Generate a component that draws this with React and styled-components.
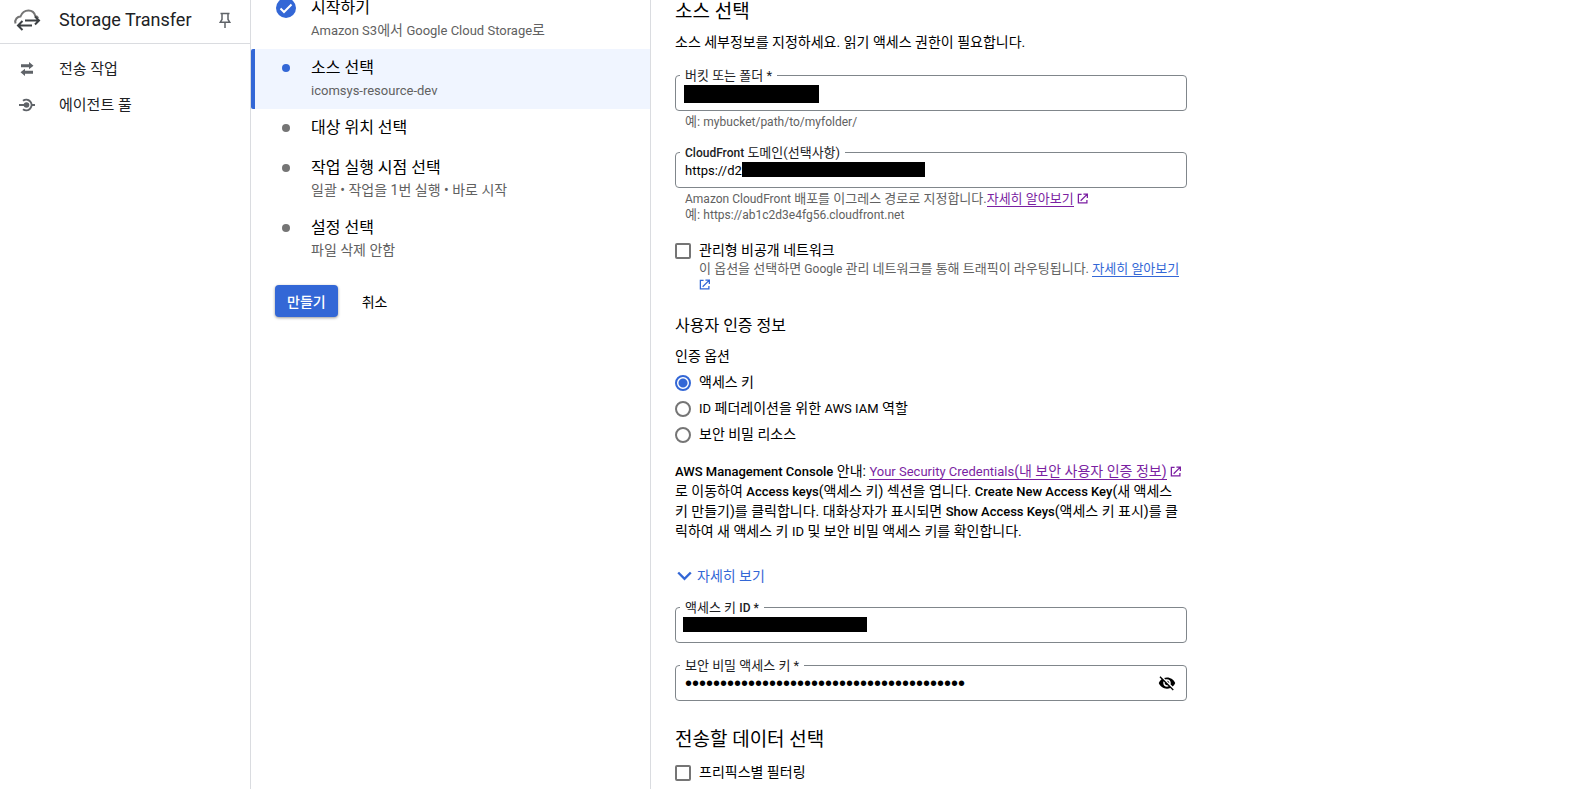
import React, { useState } from "react";
import styled, { createGlobalStyle } from "styled-components";

const GlobalStyle = createGlobalStyle`
  * {
    box-sizing: border-box;
  }

  body {
    margin: 0;
    background: #fff;
    color: #000;
    font-family: Roboto, "Noto Sans CJK KR", sans-serif;
    font-size: 14px;
    line-height: 20px;
    word-break: break-all;
  }

  button,
  input {
    font-family: inherit;
  }
`;

const Page = styled.div`
  display: flex;
  height: 100vh;
  overflow: hidden;
`;

/* ---------- sidebar ---------- */

const Sidebar = styled.nav`
  flex: 0 0 251px;
  border-right: 1px solid #dadce0;
`;

const Product = styled.header`
  display: flex;
  align-items: center;
  height: 44px;
  padding: 0 16px 4px 13px;
  border-bottom: 1px solid #dadce0;
`;

const ProductName = styled.h1`
  flex: 1;
  margin: 0 0 0 18px;
  font-size: 18px;
  font-weight: 400;
  color: #202124;
`;

const PinButton = styled.button`
  display: flex;
  padding: 0;
  border: 0;
  background: none;
  color: #5f6368;
`;

const NavList = styled.ul`
  margin: 0;
  padding: 7px 0;
  list-style: none;
`;

const NavLink = styled.a`
  display: flex;
  align-items: center;
  gap: 23px;
  height: 36px;
  padding-left: 18px;
  font-size: 15px;
  color: #202124;
  text-decoration: none;

  svg {
    color: #5f6368;
  }
`;

/* ---------- stepper ---------- */

const Stepper = styled.section`
  flex: 0 0 400px;
  border-right: 1px solid #dadce0;
`;

const StepList = styled.ol`
  margin: -11px 0 16px;
  padding: 0;
  list-style: none;
`;

const StepItem = styled.li`
  display: flex;
  gap: 14px;
  min-height: 40px;
  padding: 8px 24px 8px 20px;
  border-left: 4px solid ${({ $active }) => ($active ? "#3367d6" : "transparent")};
  border-radius: 2px 0 0 2px;
  background: ${({ $active }) => ($active ? "#f0f5ff" : "none")};
`;

const Marker = styled.span`
  display: flex;
  flex: 0 0 22px;
  align-items: center;
  justify-content: center;
  height: 22px;
`;

const Dot = styled.span`
  width: 8px;
  height: 8px;
  border-radius: 50%;
  background: ${({ $active }) => ($active ? "#3367d6" : "#757575")};
`;

const StepTitle = styled.div`
  font-size: 16px;
  line-height: 22px;
`;

const StepNote = styled.div`
  font-size: 14px;
  line-height: 22px;
  color: #616161;
`;

const Actions = styled.div`
  display: flex;
  gap: 12px;
  padding-left: 24px;
`;

const Button = styled.button`
  height: 32px;
  padding: 0 12px;
  border: 0;
  border-radius: 4px;
  font-size: 14px;
  font-weight: ${({ $primary }) => ($primary ? 500 : 400)};
  color: ${({ $primary }) => ($primary ? "#fff" : "#000")};
  background: ${({ $primary }) => ($primary ? "#3367d6" : "none")};
  box-shadow: ${({ $primary }) =>
    $primary ? "0 1px 3px rgba(0, 0, 0, 0.4)" : "none"};
`;

/* ---------- form ---------- */

const Form = styled.form`
  flex: 0 1 536px;
  min-width: 0;
  padding-left: 24px;
`;

const Heading = styled.h2`
  margin: 0 0 ${({ $gap }) => $gap || 8}px;
  font-size: 19px;
  font-weight: 400;
  line-height: 24px;
`;

const SubHeading = styled.h3`
  margin: 23px 0 10px;
  font-size: 16px;
  font-weight: 400;
  line-height: 20px;
`;

const Text = styled.p`
  margin: 0;
`;

// latin runs sit one size below the hangul around them
const En = styled.span`
  font-size: ${({ $small }) => ($small ? 12 : 13)}px;
  font-weight: ${({ $bold }) => ($bold ? 500 : "inherit")};
  line-height: 1;
`;

const Intro = styled(Text)`
  margin-bottom: 23px;
`;

const FieldGroup = styled.div`
  margin-bottom: ${({ $gap }) => $gap || 22}px;
`;

const FieldBox = styled.div`
  position: relative;
  display: flex;
  align-items: center;
  height: 36px;
  padding-right: 10px;
  border: 1px solid #80868b;
  border-radius: 4px;
`;

const FieldLabel = styled.label`
  position: absolute;
  top: -9px;
  left: 4px;
  padding: 0 5px;
  background: #fff;
  font-size: 13px;
  line-height: 18px;
  color: #202124;
`;

const Input = styled.input`
  flex: 1;
  min-width: 0;
  height: 34px;
  padding: 0 9px;
  border: 0;
  outline: 0;
  background: none;
  font-size: 13px;

  &[type="password"] {
    font-family: "Liberation Sans", sans-serif;
    font-size: 20px;
  }
`;

const Redacted = styled.span`
  position: absolute;
  top: 9px;
  left: ${({ $left }) => $left}px;
  width: ${({ $width }) => $width}px;
  height: ${({ $height }) => $height || 15}px;
  background: #000;
`;

const IconButton = styled.button`
  display: flex;
  padding: 0;
  border: 0;
  background: none;
`;

const Hint = styled.p`
  margin: ${({ $flush }) => ($flush ? 1 : 3)}px 0 0;
  padding-left: ${({ $flush }) => ($flush ? 0 : 10)}px;
  font-size: 13px;
  line-height: 16px;
  color: #616161;
`;

const Link = styled.a`
  color: ${({ $visited }) => ($visited ? "#7b1fa2" : "#3367d6")};
  text-decoration: none;

  svg {
    vertical-align: -1px;
  }
`;

const LinkText = styled.span`
  border-bottom: 1px solid currentColor;
`;

const Choice = styled.div`
  display: flex;
  gap: 8px;
`;

const ChoiceLabel = styled.label`
  display: block;
`;

const ChoiceInput = styled.input`
  appearance: none;
  flex: 0 0 16px;
  height: 16px;
  margin: 3px 0 0;
  border: 2px solid #757575;
  border-radius: ${({ type }) => (type === "radio" ? "50%" : "2px")};

  &:checked {
    border-color: #3367d6;
    background: radial-gradient(circle, #3367d6 4px, #fff 5px);
  }
`;

const RadioGroup = styled.div`
  display: flex;
  flex-direction: column;
  gap: 6px;
  margin: 6px 0 17px;
`;

const MoreButton = styled.button`
  display: flex;
  align-items: center;
  gap: 5px;
  margin: 25px 0 21px;
  padding: 0 0 0 2px;
  border: 0;
  background: none;
  color: #3367d6;
  font-size: 14px;
  line-height: 20px;
`;

const CloudIcon = () => (
  <svg width="28" height="24" viewBox="0 0 28 24" fill="none" strokeWidth="2">
    <path
      d="M2.500 15.500C1.300 11.500 4.500 8.500 7.500 8.500C9 4.500 12 2.500 15.500 2.500C19 2.500 21.500 4.800 22.300 8C23.500 8.300 24.500 9 25.200 10"
      stroke="#757575"
    />
    <path d="M5 17.500H19M9.500 13L5 17.500L9.500 22" stroke="#3c4043" />
    <path d="M12 12.500H26M22 8.500L26 12.500L22 16.500" stroke="#3c4043" />
  </svg>
);

const PinIcon = () => (
  <svg width="18" height="18" viewBox="0 0 18 18" fill="none" stroke="currentColor" strokeWidth="1.500">
    <path d="M4.500 2.500H13.500M6 2.500V8.500L4.300 11.200H13.700L12 8.500V2.500M9 11.200V17" />
  </svg>
);

const JobsIcon = () => (
  <svg width="18" height="18" viewBox="0 0 18 18" fill="currentColor">
    <path d="M3 4.200H11V2L15.500 5.700L11 9.300V7.200H3ZM15 10.800H7V8.700L2.500 12.300L7 16V13.800H15Z" />
  </svg>
);

const AgentIcon = () => (
  <svg width="18" height="18" viewBox="0 0 18 18" fill="none" stroke="currentColor" strokeWidth="2">
    <circle cx="8.500" cy="9" r="2.800" fill="currentColor" stroke="none" />
    <path d="M1 9H8M5 4.800A5.300 5.300 0 1 1 5 13.200M14 9H17" />
  </svg>
);

const CheckIcon = () => (
  <svg width="22" height="22" viewBox="0 0 22 22" fill="none">
    <circle cx="11" cy="11" r="10" fill="#3367d6" />
    <path d="M5.500 11.500L9 15L16.500 7.500" stroke="#fff" strokeWidth="2" />
  </svg>
);

const ExternalIcon = () => (
  <svg width="11" height="11" viewBox="0 0 12 12" fill="none" stroke="currentColor" strokeWidth="1.400">
    <path d="M5 1.500H1.500V10.800H10.800V7.500M7 1.200H11.300V5.500M11 1.500L4 8.500" />
  </svg>
);

const ChevronIcon = () => (
  <svg width="15" height="10" viewBox="0 0 15 10" fill="none" stroke="currentColor" strokeWidth="2.400">
    <path d="M1.200 1.500L7.500 7.800L13.800 1.500" />
  </svg>
);

const EyeOffIcon = () => (
  <svg width="18" height="18" viewBox="0 0 24 24">
    <path d="M12 7c2.760 0 5 2.240 5 5 0 .650-.130 1.260-.360 1.830l2.920 2.920c1.510-1.260 2.700-2.890 3.430-4.750-1.730-4.390-6-7.500-11-7.500-1.400 0-2.740.250-3.980.700l2.160 2.160C10.740 7.130 11.350 7 12 7zM2 4.270l2.280 2.280.460.460C3.080 8.300 1.780 10.020 1 12c1.730 4.390 6 7.500 11 7.500 1.550 0 3.030-.300 4.380-.840l.420.420L19.730 22 21 20.730 3.270 3 2 4.270zM7.530 9.800l1.550 1.550c-.050.210-.080.430-.080.650 0 1.660 1.340 3 3 3 .220 0 .440-.030.650-.080l1.550 1.550c-.670.330-1.410.530-2.200.530-2.760 0-5-2.240-5-5 0-.790.200-1.530.530-2.200zm4.310-.780l3.150 3.150.020-.160c0-1.660-1.340-3-3-3l-.170.010z" />
  </svg>
);

const ExternalLink = ({ visited, children }) => (
  <Link href="#help" $visited={visited}>
    <LinkText>{children}</LinkText> <ExternalIcon />
  </Link>
);

const steps = [
  {
    title: "시작하기",
    done: true,
    note: (
      <>
        <En>Amazon S3</En>에서 <En>Google Cloud Storage</En>로
      </>
    ),
  },
  { title: "소스 선택", active: true, note: <En>icomsys-resource-dev</En> },
  { title: "대상 위치 선택" },
  { title: "작업 실행 시점 선택", note: "일괄 • 작업을 1번 실행 • 바로 시작" },
  { title: "설정 선택", note: "파일 삭제 안함" },
];

const authOptions = [
  { id: "key", label: "액세스 키" },
  {
    id: "iam",
    label: (
      <>
        <En>ID</En> 페더레이션을 위한 <En>AWS IAM</En> 역할
      </>
    ),
  },
  { id: "secret", label: "보안 비밀 리소스" },
];

const Field = ({ id, label, type = "text", value, redacted, children }) => (
  <FieldBox>
    <FieldLabel htmlFor={id}>{label}</FieldLabel>
    <Input id={id} type={type} defaultValue={value} autoComplete="off" />
    {redacted && (
      <Redacted $left={redacted.left} $width={redacted.width} $height={redacted.height} />
    )}
    {children}
  </FieldBox>
);

const App = () => {
  const [auth, setAuth] = useState("key");

  return (
    <Page>
      <GlobalStyle />
      <Sidebar>
        <Product>
          <CloudIcon />
          <ProductName>Storage Transfer</ProductName>
          <PinButton type="button" aria-label="고정">
            <PinIcon />
          </PinButton>
        </Product>
        <NavList>
          <li>
            <NavLink href="#jobs">
              <JobsIcon />
              전송 작업
            </NavLink>
          </li>
          <li>
            <NavLink href="#agents">
              <AgentIcon />
              에이전트 풀
            </NavLink>
          </li>
        </NavList>
      </Sidebar>

      <Stepper>
        <StepList>
          {steps.map((step) => (
            <StepItem key={step.title} $active={step.active}>
              <Marker>{step.done ? <CheckIcon /> : <Dot $active={step.active} />}</Marker>
              <div>
                <StepTitle>{step.title}</StepTitle>
                {step.note && <StepNote>{step.note}</StepNote>}
              </div>
            </StepItem>
          ))}
        </StepList>
        <Actions>
          <Button type="button" $primary>
            만들기
          </Button>
          <Button type="button">취소</Button>
        </Actions>
      </Stepper>

      <Form>
        <Heading>소스 선택</Heading>
        <Intro>소스 세부정보를 지정하세요. 읽기 액세스 권한이 필요합니다.</Intro>

        <FieldGroup>
          <Field
            id="bucket"
            label="버킷 또는 폴더 *"
            redacted={{ left: 8, width: 135, height: 18 }}
          />
          <Hint>
            예: <En $small>mybucket/path/to/myfolder/</En>
          </Hint>
        </FieldGroup>

        <FieldGroup $gap={17}>
          <Field
            id="domain"
            label={
              <>
                <En $small $bold>CloudFront</En> 도메인(선택사항)
              </>
            }
            value="https://d2"
            redacted={{ left: 66, width: 183 }}
          />
          <Hint>
            <En $small>Amazon CloudFront</En> 배포를 이그레스 경로로 지정합니다.
            <ExternalLink visited>자세히 알아보기</ExternalLink>
            <br />
            예: <En $small>https://ab1c2d3e4fg56.cloudfront.net</En>
          </Hint>
        </FieldGroup>

        <Choice>
          <ChoiceInput type="checkbox" id="private-network" />
          <div>
            <ChoiceLabel htmlFor="private-network">관리형 비공개 네트워크</ChoiceLabel>
            <Hint $flush>
              이 옵션을 선택하면 <En $small>Google</En> 관리 네트워크를 통해 트래픽이 라우팅됩니다.{" "}
              <ExternalLink>자세히 알아보기</ExternalLink>
            </Hint>
          </div>
        </Choice>

        <SubHeading>사용자 인증 정보</SubHeading>
        <Text id="auth-label">인증 옵션</Text>
        <RadioGroup role="radiogroup" aria-labelledby="auth-label">
          {authOptions.map((option) => (
            <Choice key={option.id}>
              <ChoiceInput
                type="radio"
                name="auth"
                id={option.id}
                checked={auth === option.id}
                onChange={() => setAuth(option.id)}
              />
              <ChoiceLabel htmlFor={option.id}>{option.label}</ChoiceLabel>
            </Choice>
          ))}
        </RadioGroup>

        <Text>
          <En $bold>AWS Management Console</En> 안내:{" "}
          <ExternalLink visited>
            <En>Your Security Credentials</En>(내 보안 사용자 인증 정보)
          </ExternalLink>
          로 이동하여 <En $bold>Access keys</En>(액세스 키) 섹션을 엽니다.{" "}
          <En $bold>Create New Access Key</En>(새 액세스 키 만들기)를 클릭합니다. 대화상자가
          표시되면 <En $bold>Show Access Keys</En>(액세스 키 표시)를 클릭하여 새 액세스 키{" "}
          <En>ID</En> 및 보안 비밀 액세스 키를 확인합니다.
        </Text>

        <MoreButton type="button">
          <ChevronIcon />
          자세히 보기
        </MoreButton>

        <FieldGroup>
          <Field
            id="access-key"
            label={
              <>
                액세스 키 <En $small $bold>ID *</En>
              </>
            }
            redacted={{ left: 7, width: 184 }}
          />
        </FieldGroup>

        <FieldGroup $gap={27}>
          <Field
            id="secret-key"
            label="보안 비밀 액세스 키 *"
            type="password"
            value={"x".repeat(40)}
          >
            <IconButton type="button" aria-label="키 표시">
              <EyeOffIcon />
            </IconButton>
          </Field>
        </FieldGroup>

        <Heading $gap={10}>전송할 데이터 선택</Heading>
        <Choice>
          <ChoiceInput type="checkbox" id="prefix" />
          <ChoiceLabel htmlFor="prefix">프리픽스별 필터링</ChoiceLabel>
        </Choice>
      </Form>
    </Page>
  );
};

export default App;
